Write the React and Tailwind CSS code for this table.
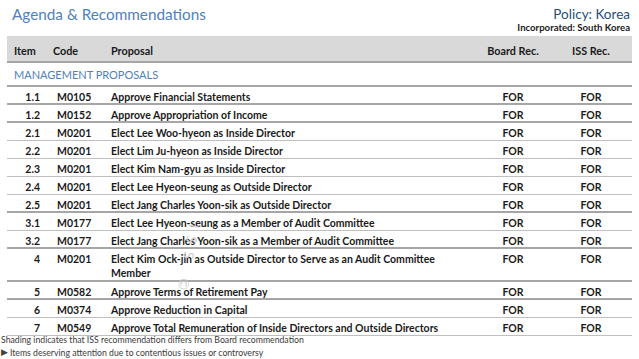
const rows = [
  { item: '1.1', code: 'M0105', text: 'Approve Financial Statements', thick: true },
  { item: '1.2', code: 'M0152', text: 'Approve Appropriation of Income', thick: true },
  { item: '2.1', code: 'M0201', text: 'Elect Lee Woo-hyeon as Inside Director' },
  { item: '2.2', code: 'M0201', text: 'Elect Lim Ju-hyeon as Inside Director' },
  { item: '2.3', code: 'M0201', text: 'Elect Kim Nam-gyu as Inside Director' },
  { item: '2.4', code: 'M0201', text: 'Elect Lee Hyeon-seung as Outside Director' },
  { item: '2.5', code: 'M0201', text: 'Elect Jang Charles Yoon-sik as Outside Director', thick: true },
  { item: '3.1', code: 'M0177', text: 'Elect Lee Hyeon-seung as a Member of Audit Committee' },
  { item: '3.2', code: 'M0177', text: 'Elect Jang Charles Yoon-sik as a Member of Audit Committee', thick: true },
  { item: '4', code: 'M0201', text: 'Elect Kim Ock-jin as Outside Director to Serve as an Audit Committee Member', thick: true, tall: true },
  { item: '5', code: 'M0582', text: 'Approve Terms of Retirement Pay', thick: true },
  { item: '6', code: 'M0374', text: 'Approve Reduction in Capital' },
  { item: '7', code: 'M0549', text: 'Approve Total Remuneration of Inside Directors and Outside Directors' },
];

const cols = 'grid grid-cols-[33px_71px_364px_76px_80px]';

export default function App() {
  return (
    <div className="relative w-[639px] h-[359px] bg-white overflow-hidden text-[#1a1a1a]" style={{ fontFamily: 'Lato, "Open Sans", sans-serif' }}>
      {/* title */}
      <div className="flex justify-between items-start pl-[12px] pr-[9px] pt-[4px] h-[36px]">
        <h1 className="text-[15.3px] leading-[20px] text-[#4f81bd]">Agenda &amp; Recommendations</h1>
        <div className="flex flex-col items-end pt-[1px]">
          <div className="text-[13.5px] leading-[18px] text-[#1f4e79]">Policy: Korea</div>
          <div className="text-[9.6px] leading-[10px] font-bold text-[#1a1a1a]">Incorporated: South Korea</div>
        </div>
      </div>

      <div className="mx-[7px]">
        {/* header */}
        <div className={`${cols} h-[27px] bg-[#d9d9d9] border-b-2 border-[#a6a6a6] items-end pb-[3px] text-[10.8px] leading-[14px] font-bold`}>
          <div className="pl-[7px]">Item</div>
          <div className="pl-[13px]">Code</div>
          <div>Proposal</div>
          <div className="text-center">Board Rec.</div>
          <div className="text-center">ISS Rec.</div>
        </div>

        {/* section */}
        <div className="h-[24px] border-b-2 border-[#a6a6a6] flex items-end pb-[3px] pl-[7px] text-[11px] leading-[14px] text-[#4f81bd]">
          MANAGEMENT PROPOSALS
        </div>

        {rows.map((r) => (
          <div
            key={r.item}
            className={`${cols} ${r.tall ? 'h-[33px]' : 'h-[18px]'} pt-[3px] text-[10.5px] leading-[14px] font-bold ${r.thick ? 'border-b-2 border-[#a6a6a6]' : 'border-b border-[#bfbfbf]'}`}
          >
            <div className="text-right">{r.item}</div>
            <div className="pl-[17px]">{r.code}</div>
            <div className="pr-[24px]">{r.text}</div>
            <div className="text-center">FOR</div>
            <div className="text-center">FOR</div>
          </div>
        ))}
      </div>

      <div className="-mt-[3px] pl-[1px] text-[8.7px] leading-[13px] text-[#3a3a3a]">
        <div>Shading indicates that ISS recommendation differs from Board recommendation</div>
        <div className="flex items-center gap-[2px]">
          <span className="text-[9px] leading-[13px] text-[#404040]" style={{ fontFamily: '"DejaVu Sans", sans-serif' }}>▶</span>
          <span>Items deserving attention due to contentious issues or controversy</span>
        </div>
      </div>

      {/* watermark */}
      <div className="absolute left-[203px] top-[226px] origin-top-left rotate-[100deg] text-[14px] leading-[17px] text-[#cfcfcf] pointer-events-none select-none tracking-[8px]">
        ISS ©
      </div>
    </div>
  );
}
